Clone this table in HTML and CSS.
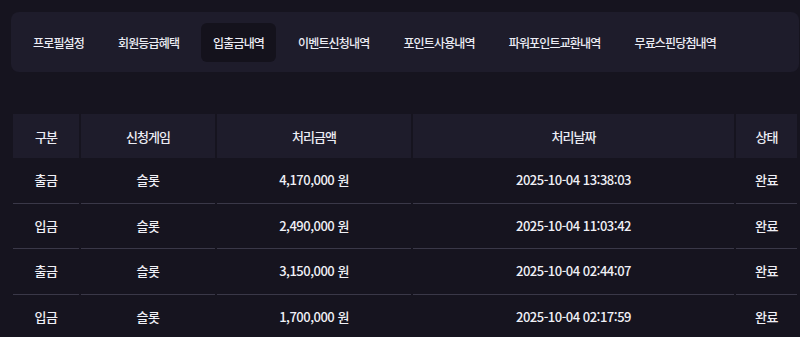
FILE: index.html
```html
<!DOCTYPE html>
<html lang="ko">
<head>
<meta charset="utf-8">
<link rel="stylesheet" href="styles.css">
</head>
<body>
<div class="page">
  <nav class="tabs">
    <a class="tab">프로필설정</a>
    <a class="tab">회원등급혜택</a>
    <a class="tab active">입출금내역</a>
    <a class="tab">이벤트신청내역</a>
    <a class="tab">포인트사용내역</a>
    <a class="tab">파워포인트교환내역</a>
    <a class="tab">무료스핀당첨내역</a>
  </nav>
  <table class="history">
    <colgroup>
      <col class="c1"><col class="c2"><col class="c3"><col class="c4"><col class="c5">
    </colgroup>
    <thead>
      <tr><th>구분</th><th>신청게임</th><th>처리금액</th><th>처리날짜</th><th>상태</th></tr>
    </thead>
    <tbody>
      <tr><td>출금</td><td>슬롯</td><td>4,170,000 원</td><td>2025-10-04 13:38:03</td><td>완료</td></tr>
      <tr><td>입금</td><td>슬롯</td><td>2,490,000 원</td><td>2025-10-04 11:03:42</td><td>완료</td></tr>
      <tr><td>출금</td><td>슬롯</td><td>3,150,000 원</td><td>2025-10-04 02:44:07</td><td>완료</td></tr>
      <tr><td>입금</td><td>슬롯</td><td>1,700,000 원</td><td>2025-10-04 02:17:59</td><td>완료</td></tr>
    </tbody>
  </table>
</div>
</body>
</html>
```
FILE: styles.css
```css
html, body {
  margin: 0;
  padding: 0;
  background: #16141f;
  overflow: hidden;
}
body {
  font-family: "Noto Sans CJK KR", "Noto Sans", sans-serif;
  color: #e8e8f0;
}
.page {
  padding: 12px 0 0 11px;
  width: 788px;
}
.tabs {
  display: flex;
  align-items: center;
  gap: 10px;
  background: #1e1c2b;
  border-radius: 8px;
  padding: 10px;
  height: 40px;
}
.tab {
  display: flex;
  align-items: center;
  height: 39px;
  padding: 0 12px;
  border-radius: 6px;
  font-size: 12px;
  font-weight: 500;
  letter-spacing: -0.85px;
  color: #ececf4;
  white-space: nowrap;
}
.tab.active {
  background: #14121c;
}
.history {
  margin-top: 42px;
  width: 788px;
  border-collapse: separate;
  border-spacing: 2px 0;
  table-layout: fixed;
  font-size: 13px;
  font-weight: 500;
  letter-spacing: -1px;
}
.c1 { width: 66px; }
.c2 { width: 134px; }
.c3 { width: 194px; }
.c4 { width: 321px; }
.c5 { width: 61px; }
.history th {
  background: #1e1c2b;
  height: 44px;
  padding: 0;
  font-weight: 500;
  color: #ececf4;
  text-align: center;
}
.history td {
  padding: 0;
  height: 44.5px;
  line-height: 20px;
  text-align: center;
  border-bottom: 1px solid #3a3848;
  color: #f0f0f6;
  letter-spacing: -0.5px;
}
```
